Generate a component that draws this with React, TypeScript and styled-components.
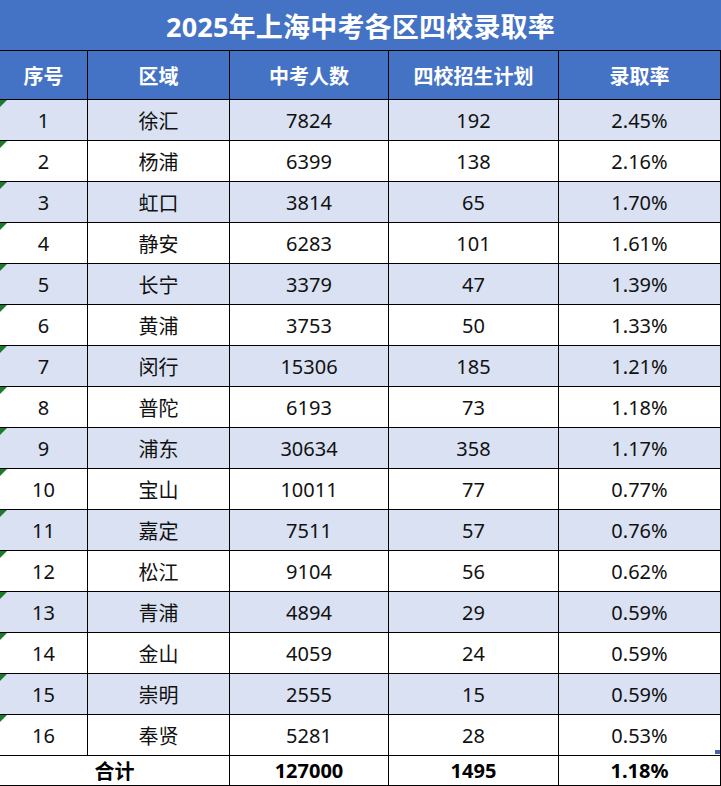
import React from "react";
import styled, { createGlobalStyle, css } from "styled-components";

const GlobalStyle = createGlobalStyle`
  html, body { margin: 0; padding: 0; background: #ffffff; }
  body { font-family: "Noto Sans", "Noto Sans CJK SC", sans-serif; }
  * { box-sizing: border-box; }
`;

const Sheet = styled.div`
  width: 721px;
  display: flex;
  flex-direction: column;
  background: #ffffff;
`;

const Title = styled.div`
  height: 50px;
  width: 721px;
  background: #4472c4;
  color: #ffffff;
  font-size: 27px;
  font-weight: 700;
  display: flex;
  align-items: center;
  justify-content: center;
  letter-spacing: 0.2px;
`;

const Row = styled.div<{ $kind: "head" | "body" | "total"; $shade?: boolean }>`
  display: grid;
  grid-template-columns: 88px 142px 159px 170px 162px;
  ${(p) =>
    p.$kind === "head"
      ? css`
          height: 50px;
          background: #4472c4;
          color: #ffffff;
          font-weight: 700;
          border-top: 1px solid #000;
        `
      : p.$kind === "total"
      ? css`
          height: 30px;
          background: #ffffff;
          color: #000;
          font-weight: 700;
          grid-template-columns: 230px 159px 170px 162px;
        `
      : css`
          height: 41px;
          background: ${p.$shade ? "#d9e1f2" : "#ffffff"};
          color: #111;
        `}
`;

const Cell = styled.div<{ $mark?: boolean }>`
  position: relative;
  display: flex;
  align-items: center;
  justify-content: center;
  font-size: 20px;
  border-right: 1px solid #000;
  border-bottom: 1px solid #000;
  white-space: nowrap;
  ${(p) =>
    p.$mark &&
    css`
      &::before {
        content: "";
        position: absolute;
        left: 0;
        top: 0;
        width: 0;
        height: 0;
        border-top: 7px solid #1c7a2c;
        border-right: 7px solid transparent;
      }
    `}
`;

const Handle = styled.span`
  position: absolute;
  right: 0;
  bottom: 1px;
  width: 5px;
  height: 4px;
  background: #4a62b0;
`;

const data: [string, string, number, number, string][] = [
  ["1", "徐汇", 7824, 192, "2.45%"],
  ["2", "杨浦", 6399, 138, "2.16%"],
  ["3", "虹口", 3814, 65, "1.70%"],
  ["4", "静安", 6283, 101, "1.61%"],
  ["5", "长宁", 3379, 47, "1.39%"],
  ["6", "黄浦", 3753, 50, "1.33%"],
  ["7", "闵行", 15306, 185, "1.21%"],
  ["8", "普陀", 6193, 73, "1.18%"],
  ["9", "浦东", 30634, 358, "1.17%"],
  ["10", "宝山", 10011, 77, "0.77%"],
  ["11", "嘉定", 7511, 57, "0.76%"],
  ["12", "松江", 9104, 56, "0.62%"],
  ["13", "青浦", 4894, 29, "0.59%"],
  ["14", "金山", 4059, 24, "0.59%"],
  ["15", "崇明", 2555, 15, "0.59%"],
  ["16", "奉贤", 5281, 28, "0.53%"],
];

export default function App() {
  return (
    <>
      <GlobalStyle />
      <Sheet>
        <Title>2025年上海中考各区四校录取率</Title>
        <Row $kind="head">
          <Cell>序号</Cell>
          <Cell>区域</Cell>
          <Cell>中考人数</Cell>
          <Cell>四校招生计划</Cell>
          <Cell>录取率</Cell>
        </Row>
        {data.map(([no, area, people, plan, rate], i) => (
          <Row key={no} $kind="body" $shade={i % 2 === 0}>
            <Cell $mark>{no}</Cell>
            <Cell>{area}</Cell>
            <Cell>{people}</Cell>
            <Cell>{plan}</Cell>
            <Cell>
              {rate}
              {i === data.length - 1 && <Handle />}
            </Cell>
          </Row>
        ))}
        <Row $kind="total">
          <Cell>合计</Cell>
          <Cell>127000</Cell>
          <Cell>1495</Cell>
          <Cell>1.18%</Cell>
        </Row>
      </Sheet>
    </>
  );
}
